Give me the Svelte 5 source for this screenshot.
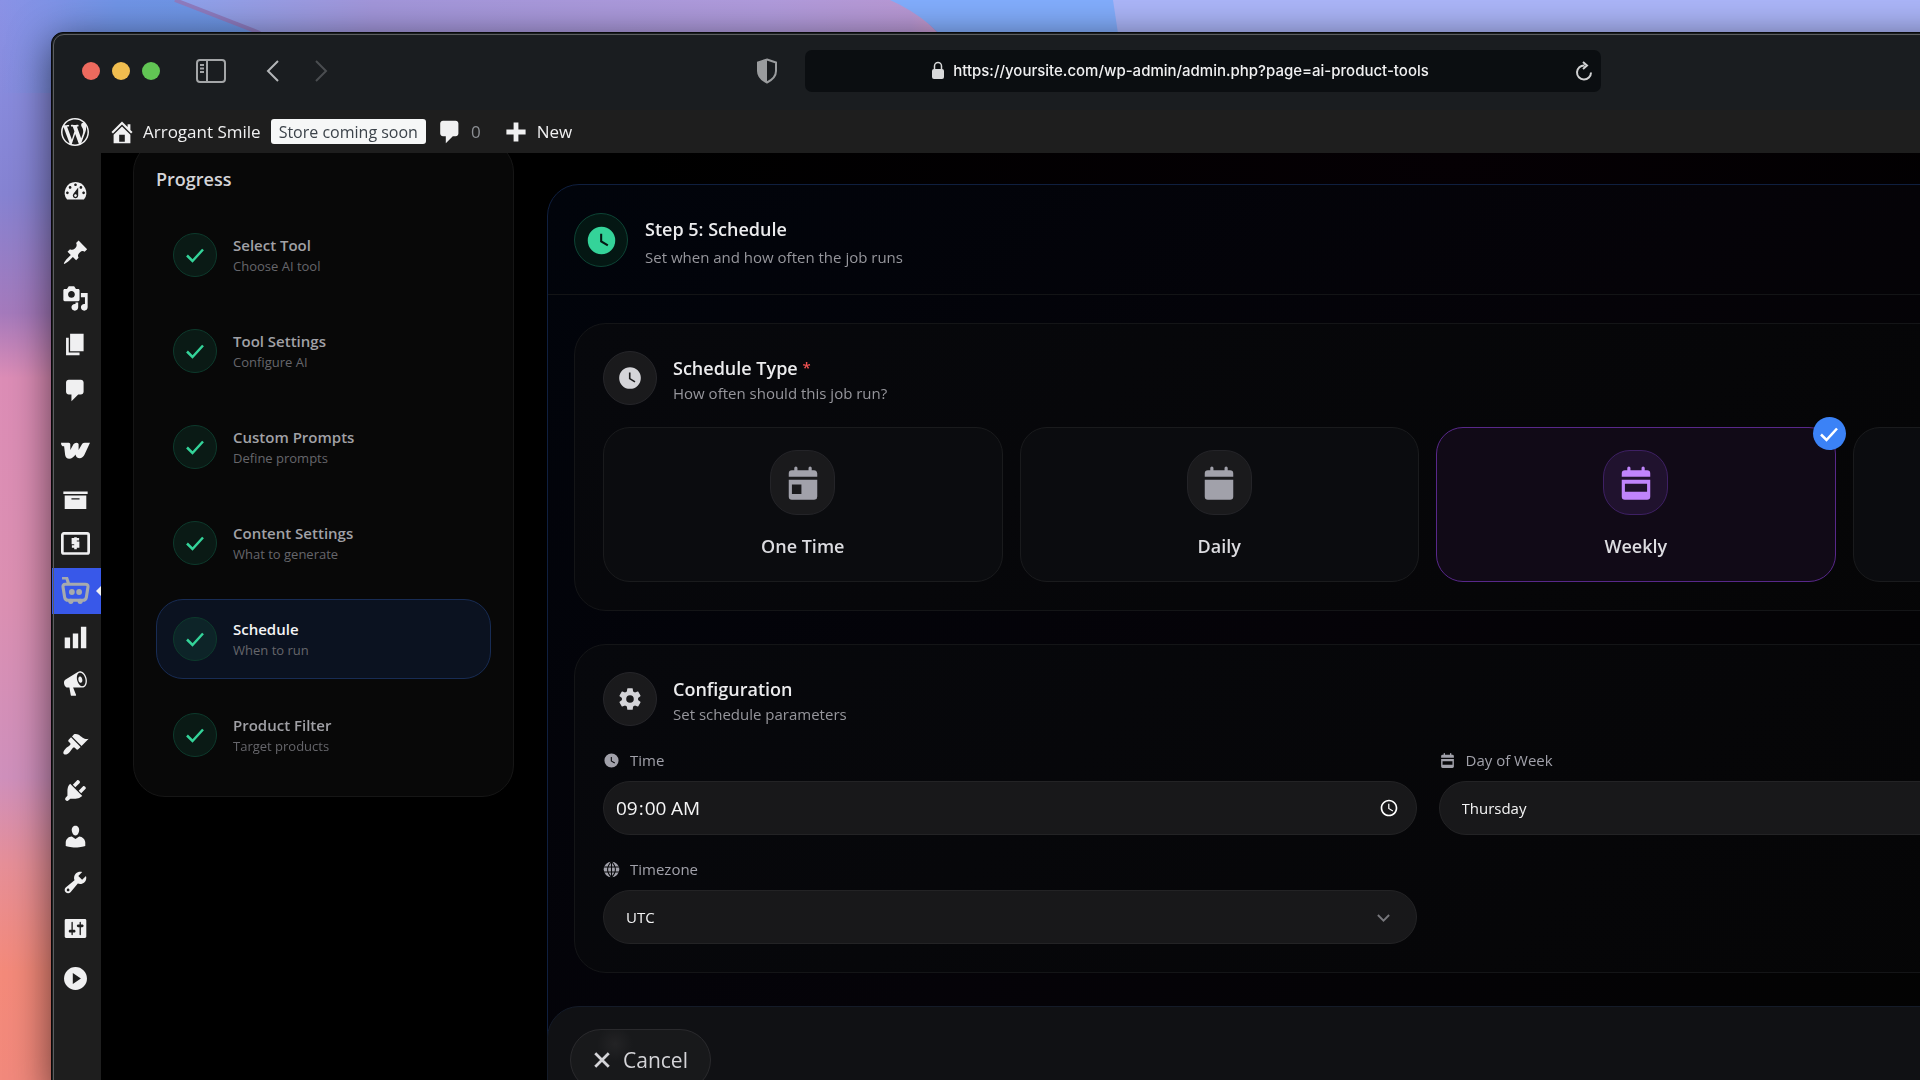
<script>
  const menu = [
    { name: 'Dashboard', path: 'M3.76 16h12.48A7.998 7.998 0 0 0 10 3a7.998 7.998 0 0 0-6.24 13zM10 4c.55 0 1 .45 1 1s-.45 1-1 1-1-.45-1-1 .45-1 1-1zM6 6c.55 0 1 .45 1 1s-.45 1-1 1-1-.45-1-1 .45-1 1-1zm8 0c.55 0 1 .45 1 1s-.45 1-1 1-1-.45-1-1 .45-1 1-1zm-5.37 5.55L12 7v6c0 1.1-.9 2-2 2s-2-.9-2-2c0-.57.24-1.08.63-1.45zM4 10c.55 0 1 .45 1 1s-.45 1-1 1-1-.45-1-1 .45-1 1-1zm12 0c.55 0 1 .45 1 1s-.45 1-1 1-1-.45-1-1 .45-1 1-1zm-5 3c0-.55-.45-1-1-1s-1 .45-1 1 .45 1 1 1 1-.45 1-1z' },
    { name: 'Posts', gap: true, path: 'M10.44 3.02l1.82-1.82 6.36 6.35-1.83 1.82c-1.05-.68-2.48-.57-3.41.36l-.75.75c-.92.93-1.04 2.35-.35 3.41l-1.83 1.82-2.41-2.41-2.8 2.79c-.42.42-3.38 2.71-3.8 2.29s1.86-3.39 2.28-3.81l2.79-2.79L4.1 9.36l1.83-1.82c1.05.69 2.48.57 3.4-.36l.75-.75c.93-.92 1.05-2.35.36-3.41z' },
    { name: 'Media', path: 'M13 11V4c0-.55-.45-1-1-1h-1.67L9 1H5L3.67 3H2c-.55 0-1 .45-1 1v7c0 .55.45 1 1 1h10c.55 0 1-.45 1-1zM7 4.5c1.38 0 2.5 1.12 2.5 2.5S8.38 9.5 7 9.5 4.5 8.38 4.5 7 5.62 4.5 7 4.5zM14 6h5v10.5c0 1.38-1.12 2.5-2.5 2.5S14 17.88 14 16.5s1.12-2.5 2.5-2.5c.17 0 .34.02.5.05V9h-3V6zm-4 8.05V13h2v3.5c0 1.38-1.12 2.5-2.5 2.5S7 17.88 7 16.5 8.12 14 9.5 14c.17 0 .34.02.5.05z' },
    { name: 'Pages', path: 'M6 15V2h10v13H6zm-1 1h8v2H3V5h2v11z' },
    { name: 'Comments', path: 'M5 2h9c1.1 0 2 .9 2 2v7c0 1.1-.9 2-2 2h-2l-5 5v-5H5c-1.1 0-2-.9-2-2V4c0-1.1.9-2 2-2z' },
    { name: 'WooCommerce', gap: true, art: 'woo' },
    { name: 'Products', path: 'M19 4v2H1V4h18zM2 7h16v10H2V7zm11 3V9H7v1h6z' },
    { name: 'Payments', art: 'pay' },
    { name: 'AI Product Tools', art: 'bot', current: true },
    { name: 'Analytics', path: 'M18 18V2h-4v16h4zm-6 0V7H8v11h4zm-6 0v-8H2v8h4z' },
    { name: 'Marketing', path: 'M18.15 5.94c.46 1.62.38 3.22-.02 4.48-.42 1.28-1.26 2.18-2.3 2.48-.16.06-.26.06-.4.06-.06.02-.12.02-.18.02-.06.02-.14.02-.22.02h-6.8l2.22 5.5c.02.14-.06.26-.14.34-.08.1-.24.16-.34.16H6.95c-.1 0-.26-.06-.34-.16-.08-.08-.16-.2-.14-.34l-1-5.5H4.25l-.02-.02c-.5.06-1.08-.18-1.54-.62s-.88-1.08-1.06-1.88c-.24-.8-.2-1.56-.02-2.2.18-.62.58-1.08 1.06-1.3l.02-.02 9-5.4c.1-.06.18-.1.24-.16.06-.04.14-.08.24-.12.16-.08.28-.12.5-.18 1.04-.3 2.24.1 3.22.98s1.84 2.24 2.26 3.86zm-2.58 5.98h-.02c.4-.1.74-.34 1.04-.7.58-.7.86-1.76.86-3.04 0-.64-.1-1.3-.28-1.98-.34-1.36-1.02-2.5-1.78-3.24s-1.68-1.1-2.46-.88c-.82.22-1.4.96-1.7 2-.32 1.04-.28 2.36.06 3.72.38 1.36 1 2.5 1.8 3.24.78.74 1.62 1.1 2.48.88zm-2.54-7.08c.22-.04.42-.02.62.04.38.16.76.48 1.02 1s.42 1.2.42 1.78c0 .3-.04.56-.12.8-.18.48-.44.84-.86.94-.34.1-.8-.06-1.14-.4s-.64-.86-.78-1.5c-.18-.62-.12-1.24.02-1.72s.48-.84.82-.94z' },
    { name: 'Appearance', gap: true, path: 'M14.48 11.06L7.41 3.99l1.5-1.5c.5-.56 2.3-.47 3.51.32 1.21.8 1.43 1.28 2.91 2.1 1.18.64 2.45 1.26 4.45.85zm-.71.71L6.7 4.7 4.93 6.47c-.39.39-.39 1.02 0 1.41l1.06 1.06c.39.39.39 1.03 0 1.42-.6.6-1.43 1.11-2.21 1.69-.35.26-.7.53-1.01.84C1.43 14.23.4 16.08 1.4 17.07c.99 1 2.84-.03 4.18-1.36.31-.31.58-.66.85-1.02.57-.78 1.08-1.61 1.69-2.21.39-.39 1.02-.39 1.41 0l1.06 1.06c.39.39 1.02.39 1.41 0z' },
    { name: 'Plugins', path: 'M13.11 4.36L9.87 7.6 8 5.73l3.24-3.24c.35-.34 1.05-.2 1.56.32.52.51.66 1.21.31 1.55zm-8 1.77l.91-1.12 9.01 9.01-1.19.84c-.71.71-2.63 1.16-3.82 1.16H6.14L4.9 17.26c-.59.59-1.54.59-2.12 0-.59-.58-.59-1.53 0-2.12l1.24-1.24v-3.88c0-1.13.4-3.19 1.09-3.89zm7.26 3.97l3.24-3.24c.34-.35 1.04-.21 1.55.31.52.51.66 1.21.31 1.55l-3.24 3.25z' },
    { name: 'Users', path: 'M10 9.25c-2.27 0-2.73-3.44-2.73-3.44C7 4.02 7.82 2 9.97 2c2.16 0 2.98 2.02 2.71 3.81 0 0-.41 3.44-2.68 3.44zm0 2.57L12.72 10c2.39 0 4.52 2.33 4.52 4.53v2.49s-3.65 1.13-7.24 1.13c-3.65 0-7.24-1.13-7.24-1.13v-2.49c0-2.25 1.94-4.48 4.47-4.48z' },
    { name: 'Tools', path: 'M16.68 9.77c-1.34 1.34-3.3 1.67-4.95.99l-5.41 6.52c-.99.99-2.59.99-3.58 0s-.99-2.59 0-3.57l6.52-5.42c-.68-1.65-.35-3.61.99-4.95 1.28-1.28 3.12-1.62 4.72-1.06l-2.89 2.89 2.82 2.82 2.86-2.87c.53 1.58.18 3.39-1.08 4.65zM3.81 16.21c.4.39 1.04.39 1.43 0 .4-.4.4-1.04 0-1.43-.39-.4-1.03-.4-1.43 0-.39.39-.39 1.03 0 1.43z' },
    { name: 'Settings', path: 'M18 16V4c0-.55-.45-1-1-1H3c-.55 0-1 .45-1 1v12c0 .55.45 1 1 1h14c.55 0 1-.45 1-1zM8 11h1c.55 0 1 .45 1 1s-.45 1-1 1H8v1.5c0 .28-.22.5-.5.5s-.5-.22-.5-.5V13H6c-.55 0-1-.45-1-1s.45-1 1-1h1V5.5c0-.28.22-.5.5-.5s.5.22.5.5V11zm5-2h-1c-.55 0-1-.45-1-1s.45-1 1-1h1V5.5c0-.28.22-.5.5-.5s.5.22.5.5V7h1c.55 0 1 .45 1 1s-.45 1-1 1h-1v5.5c0 .28-.22.5-.5.5s-.5-.22-.5-.5V9z' },
    { name: 'Collapse menu', path: 'M10 1.5a8.5 8.5 0 1 1 0 17 8.5 8.5 0 0 1 0-17zM8 6v8l6-4z' }
  ];

  const steps = [
    { title: 'Select Tool', hint: 'Choose AI tool' },
    { title: 'Tool Settings', hint: 'Configure AI' },
    { title: 'Custom Prompts', hint: 'Define prompts' },
    { title: 'Content Settings', hint: 'What to generate' },
    { title: 'Schedule', hint: 'When to run' },
    { title: 'Product Filter', hint: 'Target products' }
  ];

  const types = [
    { id: 'once', label: 'One Time', hole: 'M5 13h6v6H5z' },
    { id: 'daily', label: 'Daily', hole: '' },
    { id: 'weekly', label: 'Weekly', hole: 'M5 12.5h14v5H5z' },
    { id: 'monthly', label: 'Monthly', hole: 'M6 13h5v2H6z' }
  ];

  let current = $state(4);
  let type = $state('weekly');
  let time = $state('09:00');
  let day = $state('Thursday');
  let zone = $state('UTC');
</script>

{#snippet clock()}
  <svg viewBox="0 0 24 24" aria-hidden="true"><path fill="currentColor" d="M12 2a10 10 0 1 0 0 20 10 10 0 0 0 0-20zm4.2 14.2L11 13V7h1.5v5.2l4.5 2.7z" /></svg>
{/snippet}

{#snippet calendar(hole)}
  <svg viewBox="0 0 24 24" aria-hidden="true">
    <path fill="currentColor" fill-rule="evenodd" d="M3 8V6q0-2 2-2h1.500V2.500q0-1 1-1t1 1V4h7V2.500q0-1 1-1t1 1V4H19q2 0 2 2v2zM3 10h18v10.500q0 2-2 2H5q-2 0-2-2z{hole}" />
  </svg>
{/snippet}

{#snippet check()}
  <svg viewBox="0 0 24 24" aria-hidden="true"><path d="M4 12.5l5.5 5.5L20 6.5" fill="none" stroke="currentColor" stroke-width="2.5" /></svg>
{/snippet}

{#snippet chevron()}
  <svg class="caret" viewBox="0 0 24 24" aria-hidden="true"><path d="M3 8l9 9 9-9" fill="none" stroke="currentColor" stroke-width="3" /></svg>
{/snippet}

<svg class="wallpaper" preserveAspectRatio="none" viewBox="0 0 1920 1080" aria-hidden="true">
  <defs>
    <linearGradient id="side" x1="0" y1="0" x2="0" y2="1">
      <stop offset="0" stop-color="#8a92e6" />
      <stop offset="0.18" stop-color="#8683d2" />
      <stop offset="0.29" stop-color="#a57abc" />
      <stop offset="0.35" stop-color="#dc8db6" />
      <stop offset="0.55" stop-color="#dc90b2" />
      <stop offset="0.72" stop-color="#cf90bc" />
      <stop offset="0.8" stop-color="#e68f98" />
      <stop offset="0.9" stop-color="#f48a7a" />
      <stop offset="1" stop-color="#f2897c" />
    </linearGradient>
    <linearGradient id="blue" x1="0" x2="1">
      <stop offset="0" stop-color="#7094e6" stop-opacity="0" />
      <stop offset="0.45" stop-color="#7094e6" />
      <stop offset="1" stop-color="#6c96e4" />
    </linearGradient>
    <linearGradient id="lilac" x1="0" x2="1">
      <stop offset="0" stop-color="#8da2ec" />
      <stop offset="0.25" stop-color="#a296da" />
      <stop offset="0.75" stop-color="#b09bdc" />
      <stop offset="0.93" stop-color="#b898d4" />
      <stop offset="1" stop-color="#d79cc8" />
    </linearGradient>
  </defs>
  <rect width="1920" height="1080" fill="url(#side)" />
  <path d="M0 0h175l85 33v60H0z" fill="url(#blue)" />
  <path d="M175 0h730l60 60H330z" fill="url(#lilac)" />
  <path d="M175 0l85 33" stroke="#8f7cc0" stroke-width="4" />
  <path d="M890 0h230v60H960q-25-40-70-60z" fill="#82adfc" />
  <path d="M1113 0h807v60h-798z" fill="#abb5f8" />
</svg>

<div class="window">
  <header class="titlebar">
    <div class="left">
      <div class="lights"><i class="red"></i><i class="amber"></i><i class="green"></i></div>
      <button class="side-toggle" aria-label="Toggle sidebar">
        <svg viewBox="0 0 30 24"><rect x="1" y="1" width="28" height="22" rx="3" /><path d="M11 1v22M4 6h4M4 9.5h4M4 13h4" /></svg>
      </button>
      <button class="arrow" aria-label="Back"><svg viewBox="0 0 14 24"><path d="M12 2L2 12l10 10" /></svg></button>
      <button class="arrow off" aria-label="Forward"><svg viewBox="0 0 14 24"><path d="M2 2l10 10L2 22" /></svg></button>
      <svg class="shield" viewBox="0 0 22 26" aria-hidden="true">
        <path d="M11 1.5l9 3V13q0 7-9 11.5Q2 20 2 13V4.5z" fill="none" stroke="#9a9c9e" stroke-width="2" />
        <path d="M11 1.5V24.5Q2 20 2 13V4.5z" fill="#9a9c9e" />
      </svg>
    </div>
    <div class="address">
      <svg class="lock" viewBox="0 0 14 20" aria-hidden="true"><rect x="1" y="8" width="12" height="10" rx="2" fill="#d8d9da" /><path d="M3.5 9V5a3.5 3.5 0 0 1 7 0V9" fill="none" stroke="#d8d9da" stroke-width="1.5" /></svg>
      <input aria-label="Address" value="https://yoursite.com/wp-admin/admin.php?page=ai-product-tools" readonly />
      <button class="reload" aria-label="Reload">
        <svg viewBox="0 0 18 20"><path d="M9.5 4.5A7 7 0 1 0 16 11.5M8 1l4 3.5-4 3.5" /></svg>
      </button>
    </div>
    <div class="right"></div>
  </header>

  <div class="adminbar">
    <a class="wp" href="#about" aria-label="About WordPress">
      <svg viewBox="0 0 20 20"><path fill="currentColor" d="M20 10c0-5.51-4.49-10-10-10C4.48 0 0 4.49 0 10c0 5.52 4.48 10 10 10 5.51 0 10-4.48 10-10zM7.78 15.37L4.37 6.22c.55-.02 1.17-.08 1.17-.08.5-.06.44-1.13-.06-1.11 0 0-1.45.11-2.37.11-.18 0-.37 0-.58-.01C4.12 2.69 6.87 1.11 10 1.11c2.33 0 4.45.87 6.05 2.34-.68-.11-1.65.39-1.65 1.58 0 .74.45 1.36.9 2.1.35.61.55 1.36.55 2.46 0 1.49-1.4 5-1.4 5l-3.03-8.37c.54-.02.82-.17.82-.17.5-.05.44-1.25-.06-1.22 0 0-1.44.12-2.38.12-.87 0-2.33-.12-2.33-.12-.5-.03-.56 1.2-.06 1.22l.92.08 1.26 3.41zM17.41 10c.24-.64.74-1.87.43-4.25.7 1.29 1.05 2.71 1.05 4.25 0 3.29-1.73 6.24-4.4 7.78.97-2.59 1.94-5.2 2.92-7.78zM6.1 18.09C3.12 16.65 1.11 13.53 1.11 10c0-1.3.23-2.48.72-3.59C3.25 10.3 4.67 14.2 6.1 18.09zm4.03-6.63l2.58 6.98c-.86.29-1.76.45-2.71.45-.79 0-1.57-.11-2.29-.33.81-2.38 1.62-4.74 2.42-7.1z" /></svg>
    </a>
    <a class="site" href="#site">
      <svg viewBox="0 0 20 20" aria-hidden="true"><path fill="currentColor" d="M16 8.5l1.53 1.53-1.06 1.06L10 4.6l-6.47 6.49-1.06-1.06L10 2.5l4 4v-2h2v4zm-6-2.46l6 5.99V18H4v-5.97zM12 17v-5H8v5h4z" /></svg>
      Arrogant Smile
    </a>
    <a class="badge" href="#store">Store coming soon</a>
    <a class="count" href="#comments">
      <svg viewBox="0 0 20 20" aria-hidden="true"><path fill="currentColor" d="M5 2h9c1.1 0 2 .9 2 2v7c0 1.1-.9 2-2 2h-2l-5 5v-5H5c-1.1 0-2-.9-2-2V4c0-1.1.9-2 2-2z" /></svg>
      <span>0</span>
    </a>
    <a class="new" href="#new">
      <svg viewBox="0 0 20 20" aria-hidden="true"><path fill="currentColor" d="M8 2h4v6h6v4h-6v6H8v-6H2V8h6z" /></svg>
      New
    </a>
  </div>

  <div class="body">
    <nav class="menu" aria-label="Admin menu">
      {#each menu as item}
        <a href="#menu" aria-label={item.name} class:gap={item.gap} class:wide={item.art === 'woo'} class:current={item.current}>
          {#if item.path}
            <svg viewBox="0 0 20 20"><path fill="currentColor" fill-rule="evenodd" d={item.path} /></svg>
          {:else if item.art === 'woo'}
            <svg class="big" viewBox="0 2 28 28">
              <path d="M0 5.5h7.5q1.5 0 1.5 1.5v5.5l3-5.5q1-1.5 3-1.5t2 1.5v5.5l3.5-6q.8-1 2.5-1h5l-5.5 12q-1.500 3-4.5 3-3.500 0-4-3.500Q11.500 21 8 21 4.500 21 4 17.500L3 9H1.500Q0 8.500 0 5.500z" fill="currentColor" />
            </svg>
          {:else if item.art === 'pay'}
            <svg class="big" viewBox="0 1 28 28">
              <rect x="1.3" y="3.3" width="25.4" height="19.4" rx="1.5" fill="none" stroke="currentColor" stroke-width="2.6" />
              <path d="M17.5 9h-6v3.500h5v3.500h-6M14 7v11.500" fill="none" stroke="currentColor" stroke-width="2.5" />
            </svg>
          {:else}
            <svg class="big" viewBox="0 0 28 28">
              <path d="M1 1h4.5L7.5 7M7.5 7H4Q1.5 7 2 10l1.5 9.5q.5 3 3.5 3h14q3 0 3.5-3L26 10q.5-3-2.5-3z" fill="none" stroke="currentColor" stroke-width="3" stroke-linejoin="round" />
              <circle cx="10.5" cy="14.5" r="2.8" fill="currentColor" /><circle cx="17.5" cy="14.5" r="2.8" fill="currentColor" />
              <circle cx="9.5" cy="23.5" r="2.5" fill="currentColor" /><circle cx="18.5" cy="23.5" r="2.5" fill="currentColor" />
            </svg>
          {/if}
        </a>
      {/each}
    </nav>

    <main>
      <aside class="progress">
        <h2>Progress</h2>
        <ol>
          {#each steps as step, i}
            <li>
              <button class="step" class:active={current === i} onclick={() => (current = i)}>
                <span class="dot">{@render check()}</span>
                <span class="words"><b>{step.title}</b><small>{step.hint}</small></span>
              </button>
            </li>
          {/each}
        </ol>
      </aside>

      <section class="card">
        <div class="card-head">
          <span class="disc green">{@render clock()}</span>
          <div>
            <h1>Step 5: Schedule</h1>
            <p>Set when and how often the job runs</p>
          </div>
        </div>

        <div class="panels">
          <section class="panel">
            <div class="panel-head">
              <span class="disc">{@render clock()}</span>
              <div>
                <h2>Schedule Type <sup>*</sup></h2>
                <p>How often should this job run?</p>
              </div>
            </div>
            <div class="types">
              {#each types as t}
                <label class="type" class:picked={type === t.id}>
                  <input type="radio" name="type" value={t.id} bind:group={type} />
                  <span class="tile">{@render calendar(t.hole)}</span>
                  {t.label}
                  {#if type === t.id}<span class="tick">{@render check()}</span>{/if}
                </label>
              {/each}
            </div>
          </section>

          <section class="panel">
            <div class="panel-head">
              <span class="disc">
                <svg viewBox="0 0 24 24" aria-hidden="true"><path fill="currentColor" d="M12 15.5A3.5 3.5 0 0 1 8.5 12 3.5 3.5 0 0 1 12 8.5a3.5 3.5 0 0 1 3.5 3.5 3.5 3.5 0 0 1-3.5 3.5m7.43-2.53c.04-.32.07-.64.07-.97s-.03-.66-.07-1l2.11-1.63c.19-.15.24-.42.12-.64l-2-3.46c-.12-.22-.39-.31-.61-.22l-2.49 1c-.52-.39-1.06-.73-1.69-.98l-.37-2.65A.506.506 0 0 0 14 2h-4c-.25 0-.46.18-.5.42l-.37 2.65c-.63.25-1.17.59-1.69.98l-2.49-1c-.22-.09-.49 0-.61.22l-2 3.46c-.13.22-.07.49.12.64L4.57 11c-.04.34-.07.67-.07 1s.03.65.07.97l-2.11 1.66c-.19.15-.25.42-.12.64l2 3.46c.12.22.39.3.61.22l2.49-1.01c.52.4 1.06.74 1.69.99l.37 2.65c.04.24.25.42.5.42h4c.25 0 .46-.18.5-.42l.37-2.65c.63-.26 1.17-.59 1.69-.99l2.49 1.01c.22.08.49 0 .61-.22l2-3.46c.12-.22.07-.49-.12-.64z" /></svg>
              </span>
              <div>
                <h2>Configuration</h2>
                <p>Set schedule parameters</p>
              </div>
            </div>
            <div class="fields">
              <div class="field">
                <label for="time">{@render clock()} Time</label>
                <input id="time" type="time" bind:value={time} />
              </div>
              <div class="field">
                <label for="day">{@render calendar('M5 13h14v5H5z')} Day of Week</label>
                <div class="select">
                  <select id="day" bind:value={day}>
                    <option>Thursday</option>
                    <option>Friday</option>
                  </select>
                  {@render chevron()}
                </div>
              </div>
              <div class="field">
                <label for="zone">
                  <svg viewBox="0 0 24 24" aria-hidden="true"><circle cx="12" cy="12" r="11" fill="currentColor" /><path d="M12 1v22M1 8.5h22M1 15.5h22M12 1Q1 12 12 23M12 1q11 11 0 22" fill="none" stroke="#060709" stroke-width="1.5" /></svg>
                  Timezone
                </label>
                <div class="select">
                  <select id="zone" bind:value={zone}>
                    <option>UTC</option>
                    <option>Europe/London</option>
                  </select>
                  {@render chevron()}
                </div>
              </div>
            </div>
          </section>
        </div>

        <footer>
          <button class="cancel">
            <svg viewBox="0 0 16 16" aria-hidden="true"><path d="M2 2l12 12M14 2L2 14" stroke="currentColor" stroke-width="2.5" /></svg>
            Cancel
          </button>
        </footer>
      </section>
    </main>
  </div>
</div>

<style>
  :global(body) {
    margin: 0;
    overflow: hidden;
    background: #8a92e6;
  }

  * {
    box-sizing: border-box;
  }

  h1, h2, p, ol {
    margin: 0;
    padding: 0;
  }

  svg {
    display: block;
    flex: none;
  }

  button {
    background: none;
    border: 0;
    padding: 0;
    color: inherit;
    font: inherit;
    cursor: pointer;
  }

  a {
    color: inherit;
    text-decoration: none;
  }

  .wallpaper {
    position: fixed;
    inset: 0;
    width: 100%;
    height: 100%;
  }

  /* the window runs past the right and bottom edges of the screen */
  .window {
    position: relative;
    display: flex;
    flex-direction: column;
    width: calc(100% + 384px);
    height: calc(100vh - 16px);
    margin: 32px 0 0 51px;
    overflow: hidden;
    border: 1px solid #08090a;
    border-radius: 12px;
    background: #000;
    box-shadow: 0 8px 40px rgba(0, 0, 0, 0.6);
    font-family: "Open Sans", "Noto Sans", sans-serif;
    color: #e4e4e7;
  }

  .window::after {
    content: "";
    position: absolute;
    inset: 1px;
    border: 1px solid #5c5e60;
    border-radius: 11px;
    pointer-events: none;
  }

  .titlebar {
    display: flex;
    align-items: center;
    height: 77px;
    flex: none;
    padding: 0 30px 2px 0;
    background: #1a1d20;
  }

  .left, .right {
    flex: 1;
    display: flex;
    align-items: center;
  }

  .left {
    padding-left: 30px;
  }

  .lights {
    display: flex;
    gap: 12px;
    margin-right: 36px;
  }

  .lights i {
    width: 18px;
    height: 18px;
    border-radius: 50%;
  }

  .red { background: #ed6a5e; }
  .amber { background: #f0bd4f; }
  .lights .green { background: #61c554; }

  .side-toggle svg {
    width: 30px;
    height: 24px;
    fill: none;
    stroke: #a4a6a8;
    stroke-width: 2;
  }

  .arrow {
    margin-left: 40px;
  }

  .arrow + .arrow {
    margin-left: 34px;
  }

  .arrow svg {
    width: 14px;
    height: 24px;
    fill: none;
    stroke: #b4b6b8;
    stroke-width: 2;
  }

  .arrow.off svg {
    stroke: #4a4d50;
  }

  .shield {
    width: 22px;
    height: 26px;
    margin-left: auto;
    margin-right: 27px;
  }

  .address {
    display: flex;
    align-items: center;
    gap: 8px;
    width: 796px;
    height: 42px;
    padding: 0 8px;
    border-radius: 7px;
    background: #0b0e11;
  }

  .lock {
    width: 14px;
    height: 20px;
    margin-left: auto;
  }

  .address input {
    field-sizing: content;
    margin-right: 20px;
    padding: 0;
    border: 0;
    outline: 0;
    background: none;
    color: #f1f1f2;
    font: 500 15px Inter, "Liberation Sans", sans-serif;
  }

  .reload {
    margin-left: auto;
  }

  .reload svg {
    width: 18px;
    height: 20px;
    fill: none;
    stroke: #d0d1d2;
    stroke-width: 2;
  }

  .adminbar {
    display: flex;
    align-items: center;
    height: 43px;
    flex: none;
    padding-left: 9px;
    background: #1e1e1e;
    color: #f0f0f1;
    font-size: 17px;
  }

  .adminbar a {
    display: flex;
    align-items: center;
  }

  .wp svg {
    width: 28px;
    height: 28px;
  }

  .adminbar .site {
    gap: 7px;
    margin-left: 19px;
  }

  .site svg, .count svg {
    width: 28px;
    height: 28px;
  }

  .adminbar .badge {
    height: 25px;
    margin-left: 10px;
    padding: 0 8px;
    border-radius: 3px;
    background: #f6f7f7;
    color: #3c434a;
    font-size: 16px;
  }

  .adminbar .count {
    gap: 7px;
    margin-left: 10px;
    color: #f0f0f1;
  }

  .count span {
    color: #8c8f94;
  }

  .adminbar .new {
    gap: 9px;
    margin-left: 23px;
  }

  .new svg {
    width: 24px;
    height: 24px;
  }

  .body {
    display: flex;
    flex: 1;
    min-height: 0;
  }

  .menu {
    display: flex;
    flex-direction: column;
    width: 49px;
    flex: none;
    padding-top: 15px;
    background: #1e1e1e;
    color: #f0f0f1;
  }

  .menu a {
    position: relative;
    display: grid;
    place-items: center;
    height: 46px;
    flex: none;
    padding-right: 3px;
  }

  .menu .gap {
    margin-top: 15px;
  }

  .menu .wide {
    margin-top: 17px;
  }

  .menu svg {
    width: 27px;
    height: 27px;
  }

  .menu .big {
    width: 29px;
    height: 29px;
  }

  .menu .current {
    background: #3858e9;
    color: #a7aaad;
  }

  .menu .current::after {
    content: "";
    position: absolute;
    right: 0;
    top: 18px;
    border: 5px solid transparent;
    border-left: 0;
    border-right-color: #f0f0f1;
  }

  .menu a:last-child {
    margin-top: 4px;
  }

  main {
    display: flex;
    align-items: flex-start;
    gap: 33px;
    flex: 1;
    padding: 0 46px 0 32px;
    overflow: hidden;
    background: radial-gradient(circle at 60% 0, #050004, #000 50%);
  }

  /* scrolled slightly under the admin bar */
  .progress {
    width: 381px;
    flex: none;
    margin-top: -13px;
    padding: 24px 22px 21px;
    border: 1px solid #161616;
    border-radius: 32px;
    background: #080808;
  }

  .progress h2 {
    color: #d4d4d8;
    font-size: 18px;
    font-weight: 600;
    line-height: 28px;
  }

  .progress ol {
    display: grid;
    gap: 16px;
    margin-top: 22px;
    list-style: none;
  }

  .step {
    display: flex;
    align-items: center;
    gap: 16px;
    width: 100%;
    height: 80px;
    padding: 0 16px;
    border: 1px solid transparent;
    border-radius: 27px;
    text-align: left;
  }

  .step.active {
    border-color: #182c54;
    background: #0b1220;
  }

  .dot {
    display: grid;
    place-items: center;
    width: 44px;
    height: 44px;
    border: 1px solid #0d3a2c;
    border-radius: 50%;
    background: #0a1a15;
    color: #34d399;
  }

  .active .dot {
    background: #0d2428;
  }

  .dot svg {
    width: 24px;
    height: 24px;
  }

  .words {
    display: grid;
  }

  .words b {
    color: #a1a1a6;
    font-size: 15px;
    font-weight: 600;
    line-height: 22px;
  }

  .words small {
    color: #66666b;
    font-size: 13px;
    line-height: 20px;
  }

  .active .words b {
    color: #f4f4f5;
  }

  .card {
    flex: 1;
    margin-top: 31px;
    border: 1px solid #0f1f3f;
    border-radius: 32px 32px 0 0;
    background: linear-gradient(135deg, #01040b, #050308 45%, #030303 80%);
  }

  .card-head {
    display: flex;
    gap: 17px;
    padding: 28px 26px 25px;
    border-bottom: 1px solid #131416;
  }

  .card-head > div {
    padding-top: 4px;
  }

  h1, .panel h2 {
    color: #ececee;
    font-size: 18px;
    font-weight: 600;
    line-height: 24px;
  }

  .card p {
    color: #96969c;
    font-size: 15px;
    line-height: 24px;
  }

  .card-head p {
    margin-top: 4px;
  }

  .disc {
    display: grid;
    place-items: center;
    width: 54px;
    height: 54px;
    flex: none;
    border: 1px solid #26262a;
    border-radius: 50%;
    background: #1a1a1c;
    color: #d4d4d8;
  }

  .disc svg {
    width: 26px;
    height: 26px;
  }

  .disc.green {
    border-color: #0d4435;
    background: #041713;
    color: #34d399;
  }

  .disc.green svg {
    width: 33px;
    height: 33px;
  }

  .panels {
    display: grid;
    gap: 33px;
    padding: 28px 26px 33px;
  }

  .panel {
    padding: 27px 28px 28px;
    border: 1px solid #141517;
    border-radius: 32px;
    background: linear-gradient(135deg, #07080c, #060608 60%, #050505);
  }

  .panel-head {
    display: flex;
    align-items: flex-end;
    gap: 16px;
    margin-bottom: 22px;
  }

  .panel-head p {
    margin-top: 1px;
  }

  sup {
    color: #f05252;
    font-size: 15px;
    line-height: 0;
    vertical-align: 2px;
  }

  .types {
    display: grid;
    grid-template-columns: repeat(4, 1fr);
    gap: 17px;
  }

  .type {
    position: relative;
    display: flex;
    flex-direction: column;
    align-items: center;
    gap: 18px;
    padding: 22px 0;
    border: 1px solid #1a1b1d;
    border-radius: 27px;
    background: #0b0c0f;
    color: #dcdce0;
    font-size: 18px;
    font-weight: 600;
    line-height: 26px;
    cursor: pointer;
  }

  .type input {
    position: absolute;
    opacity: 0;
  }

  .type.picked {
    border-color: #58288a;
    background: #110a17;
  }

  .tile {
    display: grid;
    place-items: center;
    width: 65px;
    height: 65px;
    border: 1px solid #242428;
    border-radius: 27px;
    background: #1a1a1c;
    color: #a1a1aa;
  }

  .tile svg {
    width: 38px;
    height: 38px;
  }

  .picked .tile {
    border-color: #3e2064;
    background: #20122e;
    color: #c084fc;
  }

  .tick {
    position: absolute;
    top: -11px;
    right: -11px;
    display: grid;
    place-items: center;
    width: 33px;
    height: 33px;
    border-radius: 50%;
    background: #3b82f6;
    color: #fff;
  }

  .tick svg {
    width: 24px;
    height: 24px;
  }

  .fields {
    display: grid;
    grid-template-columns: 1fr 1fr;
    gap: 22px;
  }

  .field label {
    display: flex;
    align-items: center;
    gap: 10px;
    margin-bottom: 9px;
    color: #a1a1aa;
    font-size: 15px;
    line-height: 24px;
  }

  .field label svg {
    width: 17px;
    height: 17px;
  }

  .field input, select {
    width: 100%;
    height: 54px;
    border: 1px solid #232325;
    border-radius: 27px;
    background: #18181a;
    color: #f4f4f5;
    color-scheme: dark;
    font: 15px "Open Sans", "Noto Sans", sans-serif;
  }

  .field input {
    display: block;
    padding: 0 14px 0 11px;
    font-size: 19px;
  }

  select {
    display: block;
    appearance: none;
    padding: 0 22px;
  }

  .select {
    position: relative;
  }

  .caret {
    position: absolute;
    right: 26px;
    top: 20px;
    width: 15px;
    height: 15px;
    color: #77777c;
    pointer-events: none;
  }

  footer {
    margin: 0 -1px;
    padding: 22px 22px 28px;
    border: 1px solid #141b28;
    border-radius: 32px 32px 0 0;
    background: #101114;
  }

  .cancel {
    display: flex;
    align-items: center;
    gap: 12px;
    height: 62px;
    padding: 0 22px;
    border: 1px solid #2a2a2d;
    border-radius: 31px;
    background: radial-gradient(circle at 44px 14px, #232325, #18191b 18px);
    color: #d4d4d8;
    font-size: 21px;
  }

  .cancel svg {
    width: 18px;
    height: 18px;
  }
</style>
